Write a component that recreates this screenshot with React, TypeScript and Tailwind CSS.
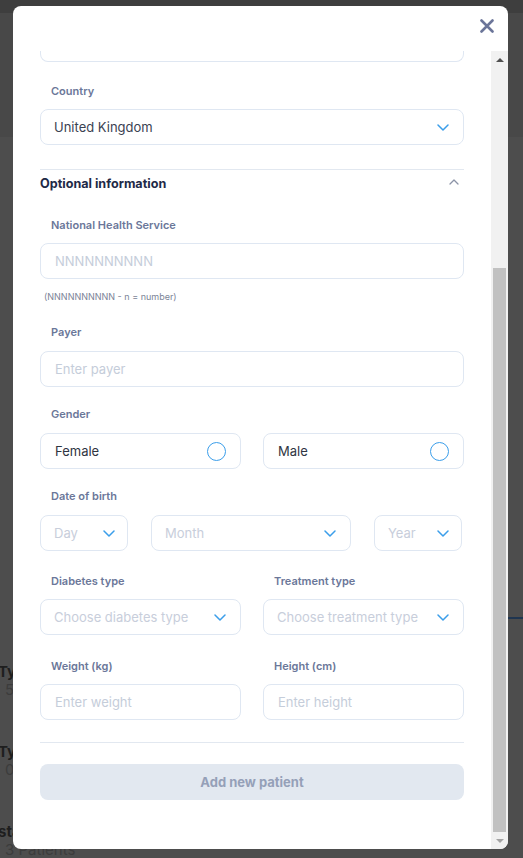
import React from "react";

const Chevron = () => (
  <svg width="12" height="7" viewBox="0 0 12 7" fill="none">
    <path d="M1 1l5 5 5-5" stroke="#3b9eea" strokeWidth="1.5" strokeLinecap="round" strokeLinejoin="round" />
  </svg>
);

const Label = ({ children, className = "" }: { children: React.ReactNode; className?: string }) => (
  <div className={`h-[18px] pl-[11px] text-[11px] font-semibold leading-[18px] text-[#6b7799] ${className}`}>{children}</div>
);

const Input = ({ placeholder, className = "" }: { placeholder: string; className?: string }) => (
  <div className={`flex h-[36px] items-center rounded-lg border border-[#dfe7f2] px-[14px] pt-[1px] text-[13px] text-[#c5cdda] ${className}`}>
    {placeholder}
  </div>
);

const Select = ({ text, muted = true, className = "", pr = "pr-[14px]" }: { text: string; muted?: boolean; className?: string; pr?: string }) => (
  <div
    className={`flex h-[36px] items-center justify-between rounded-lg border border-[#dfe7f2] pl-[13px] ${pr} text-[13px] ${
      muted ? "text-[#c8cedb]" : "text-[#3b4252]"
    } ${className}`}
  >
    <span className="pt-[1px]">{text}</span>
    <Chevron />
  </div>
);

const Radio = ({ label }: { label: string }) => (
  <div className="flex h-[36px] items-center justify-between rounded-lg border border-[#dfe7f2] pl-[14px] pr-[14px] text-[13px] text-[#2f3542]">
    <span className="pt-[1px]">{label}</span>
    <span className="h-[19px] w-[19px] rounded-full border-[1.5px] border-[#3b9eea]" />
  </div>
);

export default function App() {
  return (
    <div className="relative h-[858px] w-[523px] overflow-hidden bg-[#4d4d4d] font-['Inter','Noto_Sans',sans-serif]">
      {/* dimmed page behind the modal */}
      <div className="h-[13px] bg-[#3e3e3e]" />
      <div className="h-[124px] bg-[#484848]" />
      <div className="flex flex-col text-[15px] leading-[18px]">
        <div className="mt-[526px] -ml-[2px] font-bold text-[#1e1e1e]">Typ</div>
        <div className="ml-[5px] text-[#3c3c3c]">5</div>
        <div className="mt-[44px] -ml-[2px] font-bold text-[#1e1e1e]">Typ</div>
        <div className="ml-[5px] text-[#3c3c3c]">0</div>
        <div className="mt-[44px] -ml-[2px] font-bold text-[#1e1e1e]">sta</div>
        <div className="ml-[5px] text-[#3c3c3c]">3 Patients</div>
      </div>
      <div className="absolute right-0 top-[617px] h-[2px] w-[20px] bg-[#1f3550]" />

      {/* modal */}
      <div className="absolute left-[13px] top-[6px] flex h-[843px] w-[495px] flex-col overflow-hidden rounded-lg bg-white">
        <div className="flex h-[45px] shrink-0 justify-end pr-[14px] pt-[13px]">
          <svg width="14" height="14" viewBox="0 0 14 14" fill="none">
            <path d="M1.5 1.5l11 11M12.5 1.5l-11 11" stroke="#6b7599" strokeWidth="2.6" strokeLinecap="round" />
          </svg>
        </div>
        <div className="flex min-h-0 flex-1">
          <div className="flex-1 overflow-hidden px-[27px]">
            <div className="h-[11px] rounded-b-lg border-x border-b border-[#dfe7f2]" />

            <Label className="mt-[20px]">Country</Label>
            <Select text="United Kingdom" muted={false} className="mt-[9px]" />

            <div className="mt-[24px] border-t border-[#e2e8f0]" />
            <div className="flex h-[23px] items-end justify-between pr-[5px]">
              <span className="text-[12.6px] font-bold leading-[18px] text-[#1e2a47]">Optional information</span>
              <svg width="10" height="6" viewBox="0 0 10 6" fill="none" className="mb-[8px]">
                <path d="M1 5l4-4 4 4" stroke="#8b93a7" strokeWidth="1.3" strokeLinecap="round" strokeLinejoin="round" />
              </svg>
            </div>

            <Label className="mt-[23px]">National Health Service</Label>
            <Input placeholder="NNNNNNNNNN" className="mt-[9px]" />
            <div className="mt-[12px] h-[12px] pl-[4px] text-[9px] leading-[12px] text-[#7b8497]">(NNNNNNNNNN - n = number)</div>

            <Label className="mt-[20px]">Payer</Label>
            <Input placeholder="Enter payer" className="mt-[10px]" />

            <Label className="mt-[18px]">Gender</Label>
            <div className="mt-[10px] grid grid-cols-2 gap-[22px]">
              <Radio label="Female" />
              <Radio label="Male" />
            </div>

            <Label className="mt-[18px]">Date of birth</Label>
            <div className="mt-[10px] flex gap-[23px]">
              <Select text="Day" className="w-[88px]" pr="pr-[12px]" />
              <Select text="Month" className="w-[200px]" />
              <Select text="Year" className="w-[88px]" pr="pr-[12px]" />
            </div>

            <div className="mt-[21px] grid grid-cols-2 gap-[22px]">
              <Label>Diabetes type</Label>
              <Label>Treatment type</Label>
            </div>
            <div className="mt-[9px] grid grid-cols-2 gap-[22px]">
              <Select text="Choose diabetes type" />
              <Select text="Choose treatment type" />
            </div>

            <div className="mt-[22px] grid grid-cols-2 gap-[22px]">
              <Label>Weight (kg)</Label>
              <Label>Height (cm)</Label>
            </div>
            <div className="mt-[9px] grid grid-cols-2 gap-[22px]">
              <Input placeholder="Enter weight" />
              <Input placeholder="Enter height" />
            </div>

            <div className="mt-[22px] border-t border-[#e2e8f0]" />
            <div className="mt-[21px] flex h-[36px] items-center justify-center rounded-lg bg-[#e2e8f0] pt-[1px] text-[13px] font-bold text-[#95a0b8]">
              Add new patient
            </div>
          </div>

          {/* scrollbar */}
          <div className="flex w-[17px] shrink-0 flex-col bg-[#f1f1f1]">
            <div className="flex h-[17px] items-center justify-center">
              <svg width="8" height="4" viewBox="0 0 8 4">
                <polygon points="0,4 4,0 8,4" fill="#505050" />
              </svg>
            </div>
            <div className="flex-1 px-[2px] pt-[200px]">
              <div className="h-full bg-[#c1c1c1]" />
            </div>
            <div className="flex h-[17px] items-center justify-center">
              <svg width="8" height="4" viewBox="0 0 8 4">
                <polygon points="0,0 8,0 4,4" fill="#a3a3a3" />
              </svg>
            </div>
          </div>
        </div>
      </div>
    </div>
  );
}
